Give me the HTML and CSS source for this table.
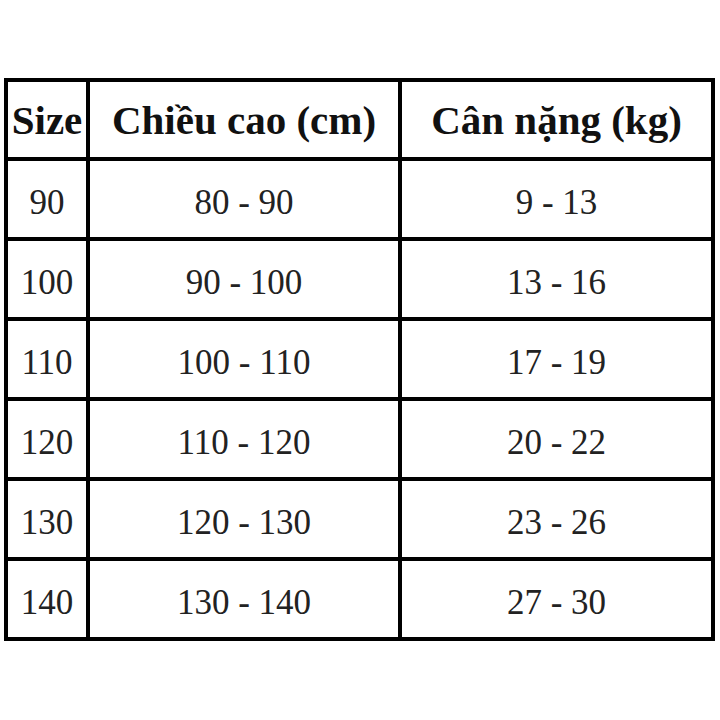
FILE: index.html
```html
<!DOCTYPE html>
<html lang="vi">
<head>
<meta charset="utf-8">
<title>Bảng size</title>
<link rel="stylesheet" href="styles.css">
</head>
<body>
<table class="size-table">
  <colgroup>
    <col class="c-size">
    <col class="c-height">
    <col class="c-weight">
  </colgroup>
  <thead>
    <tr><th>Size</th><th>Chiều cao (cm)</th><th>Cân nặng (kg)</th></tr>
  </thead>
  <tbody>
    <tr><td>90</td><td>80 - 90</td><td>9 - 13</td></tr>
    <tr><td>100</td><td>90 - 100</td><td>13 - 16</td></tr>
    <tr><td>110</td><td>100 - 110</td><td>17 - 19</td></tr>
    <tr><td>120</td><td>110 - 120</td><td>20 - 22</td></tr>
    <tr><td>130</td><td>120 - 130</td><td>23 - 26</td></tr>
    <tr><td>140</td><td>130 - 140</td><td>27 - 30</td></tr>
  </tbody>
</table>
</body>
</html>
```
FILE: styles.css
```css
html, body {
  margin: 0;
  padding: 0;
  background: #fff;
}
body {
  font-family: "Liberation Serif", "Times New Roman", serif;
  color: #1a1a1a;
}
.size-table {
  border-collapse: collapse;
  table-layout: fixed;
  width: 711px;
  margin: 78px 0 0 4px;
}
.c-size { width: 82px; }
.c-height { width: 312px; }
.c-weight { width: 313px; }
.size-table th,
.size-table td {
  border: 4px solid #000;
  padding: 0;
  text-align: center;
  vertical-align: middle;
  white-space: nowrap;
}
.size-table th {
  height: 75px;
  font-size: 41px;
  font-weight: bold;
  color: #111;
}
.size-table td {
  height: 68px;
  padding-top: 8px;
  font-size: 35px;
  font-weight: normal;
  color: #222;
}
```
